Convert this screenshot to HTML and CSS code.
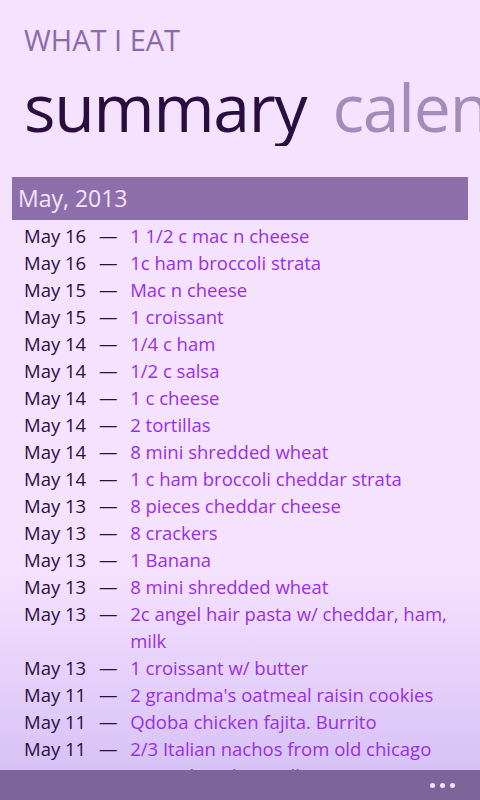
FILE: index.html
```html
<!DOCTYPE html>
<html lang="en">
<head>
  <meta charset="UTF-8">
  <meta name="viewport" content="width=device-width, initial-scale=1.0">
  <title>What I Eat - Summary</title>
  <link rel="stylesheet" href="styles.css">
</head>
<body>

  <header class="app-header">
    <p class="app-title">WHAT I EAT</p>
    <div class="pivot">
      <h1 class="pivot-item active">summary</h1>
      <h1 class="pivot-item">calendar</h1>
    </div>
  </header>

  <section class="month">
    <h2 class="month-head">May, 2013</h2>
    <ul class="entries">
      <li><span class="date">May 16</span><span class="dash">—</span><span class="food">1 1/2 c mac n cheese</span></li>
      <li><span class="date">May 16</span><span class="dash">—</span><span class="food">1c ham broccoli strata</span></li>
      <li><span class="date">May 15</span><span class="dash">—</span><span class="food">Mac n cheese</span></li>
      <li><span class="date">May 15</span><span class="dash">—</span><span class="food">1 croissant</span></li>
      <li><span class="date">May 14</span><span class="dash">—</span><span class="food">1/4 c ham</span></li>
      <li><span class="date">May 14</span><span class="dash">—</span><span class="food">1/2 c salsa</span></li>
      <li><span class="date">May 14</span><span class="dash">—</span><span class="food">1 c cheese</span></li>
      <li><span class="date">May 14</span><span class="dash">—</span><span class="food">2 tortillas</span></li>
      <li><span class="date">May 14</span><span class="dash">—</span><span class="food">8 mini shredded wheat</span></li>
      <li><span class="date">May 14</span><span class="dash">—</span><span class="food">1 c ham broccoli cheddar strata</span></li>
      <li><span class="date">May 13</span><span class="dash">—</span><span class="food">8 pieces cheddar cheese</span></li>
      <li><span class="date">May 13</span><span class="dash">—</span><span class="food">8 crackers</span></li>
      <li><span class="date">May 13</span><span class="dash">—</span><span class="food">1 Banana</span></li>
      <li><span class="date">May 13</span><span class="dash">—</span><span class="food">8 mini shredded wheat</span></li>
      <li><span class="date">May 13</span><span class="dash">—</span><span class="food">2c angel hair pasta w/ cheddar, ham, milk</span></li>
      <li><span class="date">May 13</span><span class="dash">—</span><span class="food">1 croissant w/ butter</span></li>
      <li><span class="date">May 11</span><span class="dash">—</span><span class="food">2 grandma's oatmeal raisin cookies</span></li>
      <li><span class="date">May 11</span><span class="dash">—</span><span class="food">Qdoba chicken fajita. Burrito</span></li>
      <li><span class="date">May 11</span><span class="dash">—</span><span class="food">2/3 Italian nachos from old chicago</span></li>
      <li><span class="date">May 11</span><span class="dash">—</span><span class="food">12 oz chocolate milk</span></li>
    </ul>
  </section>

  <footer class="app-bar">
    <span class="dots"><i></i><i></i><i></i></span>
  </footer>

</body>
</html>
```

FILE: styles.css
```css
* { margin: 0; padding: 0; box-sizing: border-box; font-family: 'Open Sans', sans-serif; }
html, body { height: 100%; overflow: hidden; }
body {
  background: linear-gradient(to bottom, #f5e2fe 0px, #f5e2fe 570px, #d7c2f6 770px);
  color: #2a0e3f;
}

.app-header { padding: 22px 0 0 24px; white-space: nowrap; overflow: hidden; }
.app-title { font-size: 29px; color: #8c6aac; letter-spacing: 0; line-height: 36px; }
.pivot { display: flex; gap: 26px; margin-top: 8px; }
.pivot-item { font-size: 66px; font-weight: 400; line-height: 80px; letter-spacing: -1.2px; color: #a48cb8; }
.pivot-item.active { color: #2a0e3f; }

.month { padding: 31px 12px 0; }
.month-head {
  background: #8e6fab; color: #f5e4fe; font-weight: 400;
  font-size: 23px; line-height: 43px; padding-left: 6px;
}
.entries { list-style: none; padding: 2px 8px 0 12px; }
.entries li { display: flex; font-size: 18.5px; line-height: 27px; }
.date { color: #2a0e3f; }
.dash { width: 44px; text-align: center; color: #2a0e3f; }
.food { flex: 1; color: #9a2ee6; }

.app-bar {
  position: fixed; left: 0; right: 0; bottom: 0; height: 30px;
  background: #7c6699; display: flex; justify-content: flex-end; align-items: center;
  padding-right: 25px;
}
.dots { display: flex; gap: 5px; }
.dots i { width: 5px; height: 5px; border-radius: 50%; background: #f5e4fe; }
```
